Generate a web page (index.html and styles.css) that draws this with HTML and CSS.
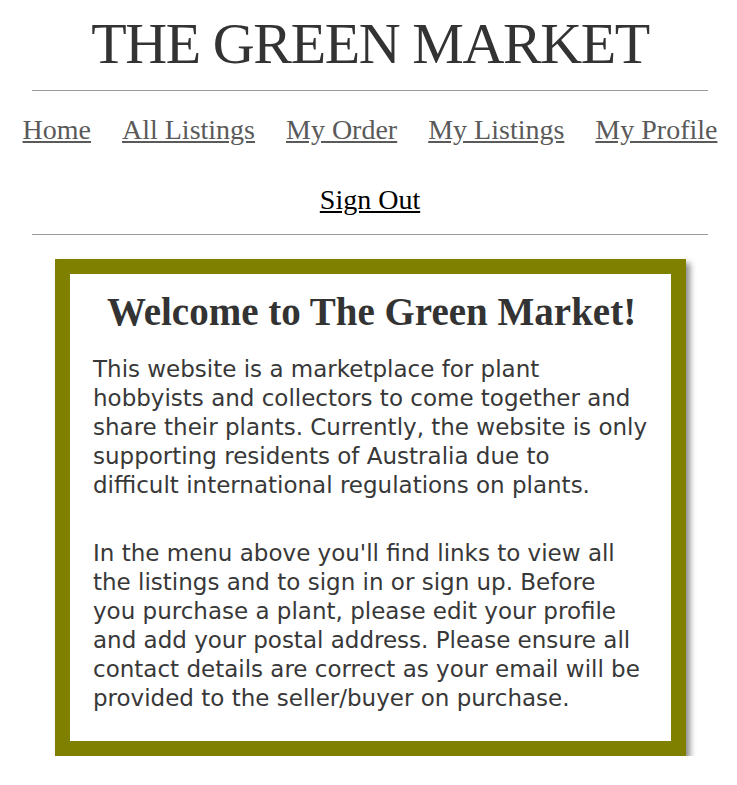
FILE: index.html
```html
<!DOCTYPE html>
<html>
<head>
<meta charset="utf-8">
<link rel="stylesheet" href="styles.css">
</head>
<body>
<header class="site-header">
  <h1 class="site-title">THE GREEN MARKET</h1>
  <hr class="rule">
  <nav class="nav">
    <a class="nav-link" href="#">Home</a>
    <a class="nav-link" href="#">All Listings</a>
    <a class="nav-link" href="#">My Order</a>
    <a class="nav-link" href="#">My Listings</a>
    <a class="nav-link" href="#">My Profile</a>
    <a class="nav-link nav-link-dark" href="#">Sign Out</a>
  </nav>
  <hr class="rule">
</header>
<main class="card">
  <h2 class="card-title">Welcome to The Green Market!</h2>
  <p class="card-text">This website is a marketplace for plant<br>
hobbyists and collectors to come together and<br>
share their plants. Currently, the website is only<br>
supporting residents of Australia due to<br>
difficult international regulations on plants.</p>
  <p class="card-text">In the menu above you'll find links to view all<br>
the listings and to sign in or sign up. Before<br>
you purchase a plant, please edit your profile<br>
and add your postal address. Please ensure all<br>
contact details are correct as your email will be<br>
provided to the seller/buyer on purchase.</p>
</main>
</body>
</html>
```
FILE: styles.css
```css
html, body {
  margin: 0;
  padding: 0;
  background: #fff;
}
body {
  padding: 0 29px 0 32px;
  font-family: "Liberation Serif", serif;
  color: #333;
}
.site-header {
  text-align: center;
}
.site-title {
  margin: 0;
  padding-top: 11px;
  font-family: "Liberation Serif", serif;
  font-weight: normal;
  font-size: 58px;
  letter-spacing: -1.4px;
  line-height: 66px;
  color: #333;
}
.rule {
  margin: 13px 0 0 0;
  border: 0;
  border-top: 1px solid #999;
  height: 0;
}
.nav {
  display: flex;
  flex-wrap: wrap;
  justify-content: center;
  column-gap: 31px;
  row-gap: 38px;
  margin: 0 -10px;
  padding: 23px 0 5px;
}
.nav-link {
  font-family: "Liberation Serif", serif;
  font-size: 28px;
  line-height: 32px;
  color: #5a5a5a;
  text-decoration: underline;
}
.nav-link-dark {
  color: #000;
}
.card {
  margin: 24px 22px 0 23px;
  border: 15px solid #808000;
  background: #fff;
  padding: 15px 14px 28px 23px;
  box-shadow: 4px 4px 6px rgba(0,0,0,0.45);
}
.card-title {
  margin: 0 0 20px;
  text-align: center;
  font-family: "Liberation Serif", serif;
  font-weight: bold;
  font-size: 39px;
  line-height: 46px;
  color: #333;
  padding-right: 7px;
}
.card-text {
  margin: 0 0 39px;
  font-family: "DejaVu Sans", sans-serif;
  font-size: 23px;
  line-height: 29px;
  color: #383838;
}
.card-text:last-child {
  margin-bottom: 0;
}
```
